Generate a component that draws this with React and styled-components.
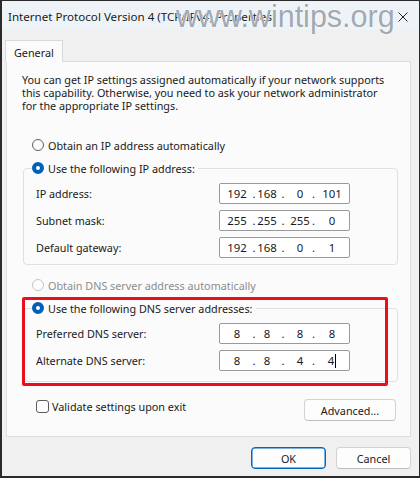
import React from 'react';
import styled, { createGlobalStyle } from 'styled-components';

const Global = createGlobalStyle`
  html, body { margin: 0; padding: 0; background: #ffffff; }
  * { box-sizing: border-box; }
`;

const ipRows = [
    { label: 'IP address:', parts: ['192', '168', '0', '101'] },
    { label: 'Subnet mask:', parts: ['255', '255', '255', '0'] },
    { label: 'Default gateway:', parts: ['192', '168', '0', '1'] },
];

const dnsRows = [
    { label: 'Preferred DNS server:', parts: ['8', '8', '8', '8'] },
    { label: 'Alternate DNS server:', parts: ['8', '8', '4', '4'], caret: true },
];

function IpBox({ parts, caret }) {
    return (
        <IpField>
            <Seg w={26}>{parts[0]}</Seg>
            <Dot w={8}>.</Dot>
            <Seg w={18}>{parts[1]}</Seg>
            <Dot w={14}>.</Dot>
            <Seg w={20}>{parts[2]}</Seg>
            <Dot w={7}>.</Dot>
            <Seg w={30}>
                {parts[3]}
                {caret && <Caret />}
            </Seg>
        </IpField>
    );
}

function Radio({ checked, disabled, children }) {
    return (
        <RadioLine disabled={disabled}>
            <RadioDot checked={checked} disabled={disabled} />
            {children}
        </RadioLine>
    );
}

function App() {
    return (
        <>
            <Global />
            <Window>
                <TitleBar>
                    <Title>Internet Protocol Version 4 (TCP/IPv4) Properties</Title>
                    <svg width="10" height="10" viewBox="0 0 10 10">
                        <path d="M0.5 0.5 L9.5 9.5 M9.5 0.5 L0.5 9.5" stroke="#222" strokeWidth="1" />
                    </svg>
                </TitleBar>
                <Body>
                    <Tabs>
                        <Tab>General</Tab>
                    </Tabs>
                    <Panel>
                        <Desc>
                            You can get IP settings assigned automatically if your network supports
                            this capability. Otherwise, you need to ask your network administrator
                            for the appropriate IP settings.
                        </Desc>
                        <Option>
                            <Radio>Obtain an IP address automatically</Radio>
                        </Option>
                        <Group>
                            <Legend>
                                <Radio checked>Use the following IP address:</Radio>
                            </Legend>
                            {ipRows.map((r) => (
                                <Row key={r.label}>
                                    <Label>{r.label}</Label>
                                    <IpBox parts={r.parts} />
                                </Row>
                            ))}
                        </Group>
                        <Option top={12}>
                            <Radio disabled>Obtain DNS server address automatically</Radio>
                        </Option>
                        <Group dns>
                            <Legend>
                                <Radio checked>Use the following DNS server addresses:</Radio>
                            </Legend>
                            {dnsRows.map((r) => (
                                <Row key={r.label}>
                                    <Label>{r.label}</Label>
                                    <IpBox parts={r.parts} caret={r.caret} />
                                </Row>
                            ))}
                        </Group>
                        <BottomRow>
                            <Check>
                                <Box />
                                Validate settings upon exit
                            </Check>
                            <Button w={92}>Advanced...</Button>
                        </BottomRow>
                    </Panel>
                    <Footer>
                        <Button w={75} primary>OK</Button>
                        <Button w={75}>Cancel</Button>
                    </Footer>
                </Body>
                <Highlight />
                <Watermark>www.wintips.org</Watermark>
            </Window>
        </>
    );
}

const Window = styled.div`
    position: relative;
    width: 420px;
    height: 478px;
    display: flex;
    flex-direction: column;
    border: 1px solid #2a2a2a;
    border-left-width: 2px;
    border-bottom-width: 2px;
    background: #f0f0f0;
    font-family: "Segoe UI", "Noto Sans", sans-serif;
    font-size: 10.8px;
    color: #1a1a1a;
    overflow: hidden;
`;

const TitleBar = styled.div`
    height: 29px;
    display: flex;
    align-items: center;
    justify-content: space-between;
    padding: 2px 11px 0 6px;
    background: #eef3f8;
`;

const Title = styled.div`
    font-size: 11.6px;
    color: #1b1b1b;
`;

const Body = styled.div`
    flex: 1;
    display: flex;
    flex-direction: column;
    padding: 10px 8px 7px 3px;
`;

const Tabs = styled.div`
    display: flex;
    height: 21px;
`;

const Tab = styled.div`
    width: 58px;
    height: 22px;
    padding: 4px 0 0 8px;
    background: #fbfbfb;
    border: 1px solid #d9d9d9;
    border-bottom: none;
    position: relative;
    z-index: 1;
`;

const Panel = styled.div`
    height: 376px;
    margin-left: 1px;
    padding: 11px 12px 0 16px;
    background: #fbfbfb;
    border: 1px solid #dcdcdc;
    display: flex;
    flex-direction: column;
`;

const Desc = styled.div`
    line-height: 13px;
    margin-left: -1px;
    width: 372px;
`;

const Option = styled.div`
    margin-top: ${(p) => p.top ?? 25}px;
    padding-left: 9px;
`;

const RadioLine = styled.div`
    display: flex;
    align-items: center;
    gap: 4px;
    height: 16px;
    color: ${(p) => (p.disabled ? '#8c8c8c' : '#1a1a1a')};
`;

const RadioDot = styled.span`
    width: 12px;
    height: 12px;
    border-radius: 50%;
    flex: none;
    background: ${(p) => (p.checked ? '#ffffff' : '#fdfdfd')};
    border: ${(p) =>
        p.checked ? '4px solid #005fb8' : `1px solid ${p.disabled ? '#c6c6c6' : '#606060'}`};
`;

const Group = styled.fieldset`
    margin: 7px 0 0 0;
    padding: 0 12px ${(p) => (p.dns ? '10px' : '6px')} 12px;
    border: 1px solid #e0e0e0;
    border-radius: 4px;
    display: flex;
    flex-direction: column;
    gap: 6px;
    min-width: 0;
`;

const Legend = styled.legend`
    margin-left: -4px;
    padding: 0 3px 0 0;
    margin-bottom: 1px;
`;

const Row = styled.div`
    display: flex;
    align-items: center;
    height: 21px;
    &:first-of-type {
        margin-top: 6px;
    }
`;

const Label = styled.div`
    width: 183px;
`;

const IpField = styled.div`
    width: 131px;
    height: 21px;
    display: flex;
    align-items: center;
    padding-left: 4px;
    background: #ffffff;
    border: 1px solid #9a9a9a;
    border-radius: 2px;
    font-size: 11.4px;
`;

const Seg = styled.span`
    width: ${(p) => p.w}px;
    text-align: center;
    white-space: nowrap;
    display: flex;
    justify-content: center;
    align-items: center;
`;

const Dot = styled.span`
    width: ${(p) => p.w}px;
    text-align: center;
`;

const Caret = styled.span`
    width: 1px;
    height: 14px;
    margin-left: 1px;
    background: #000000;
`;

const BottomRow = styled.div`
    margin-top: 17px;
    display: flex;
    justify-content: space-between;
    align-items: flex-start;
    padding-right: 2px;
`;

const Check = styled.div`
    display: flex;
    align-items: center;
    gap: 3px;
    margin-left: 13px;
    height: 14px;
`;

const Box = styled.span`
    width: 13px;
    height: 13px;
    border: 1px solid #5c5c5c;
    border-radius: 3px;
    background: #fdfdfd;
`;

const Button = styled.button`
    width: ${(p) => p.w}px;
    height: 22px;
    padding: 0;
    font-family: inherit;
    font-size: 10.8px;
    color: #1a1a1a;
    background: #fdfdfd;
    border: 1px solid ${(p) => (p.primary ? '#0067c0' : '#d2d2d2')};
    border-bottom-color: ${(p) => (p.primary ? '#0067c0' : '#bdbdbd')};
    border-radius: 4px;
    box-shadow: ${(p) => (p.primary ? 'inset 0 0 0 0.5px #0067c0' : 'none')};
`;

const Footer = styled.div`
    margin-top: 10px;
    display: flex;
    justify-content: flex-end;
    gap: 10px;
`;

const Highlight = styled.div`
    position: absolute;
    left: 20px;
    top: 296px;
    width: 366px;
    height: 89px;
    border: 3px solid #e8101c;
    border-radius: 2px;
    pointer-events: none;
`;

const Watermark = styled.div`
    position: absolute;
    left: 174px;
    top: 0px;
    font-family: "Liberation Sans", Arial, sans-serif;
    font-size: 30.5px;
    line-height: 30px;
    color: rgba(150, 157, 166, 0.9);
    text-shadow: 0 0 1px #ffffff, 0 0 1px #ffffff;
    pointer-events: none;
`;

export default App;
